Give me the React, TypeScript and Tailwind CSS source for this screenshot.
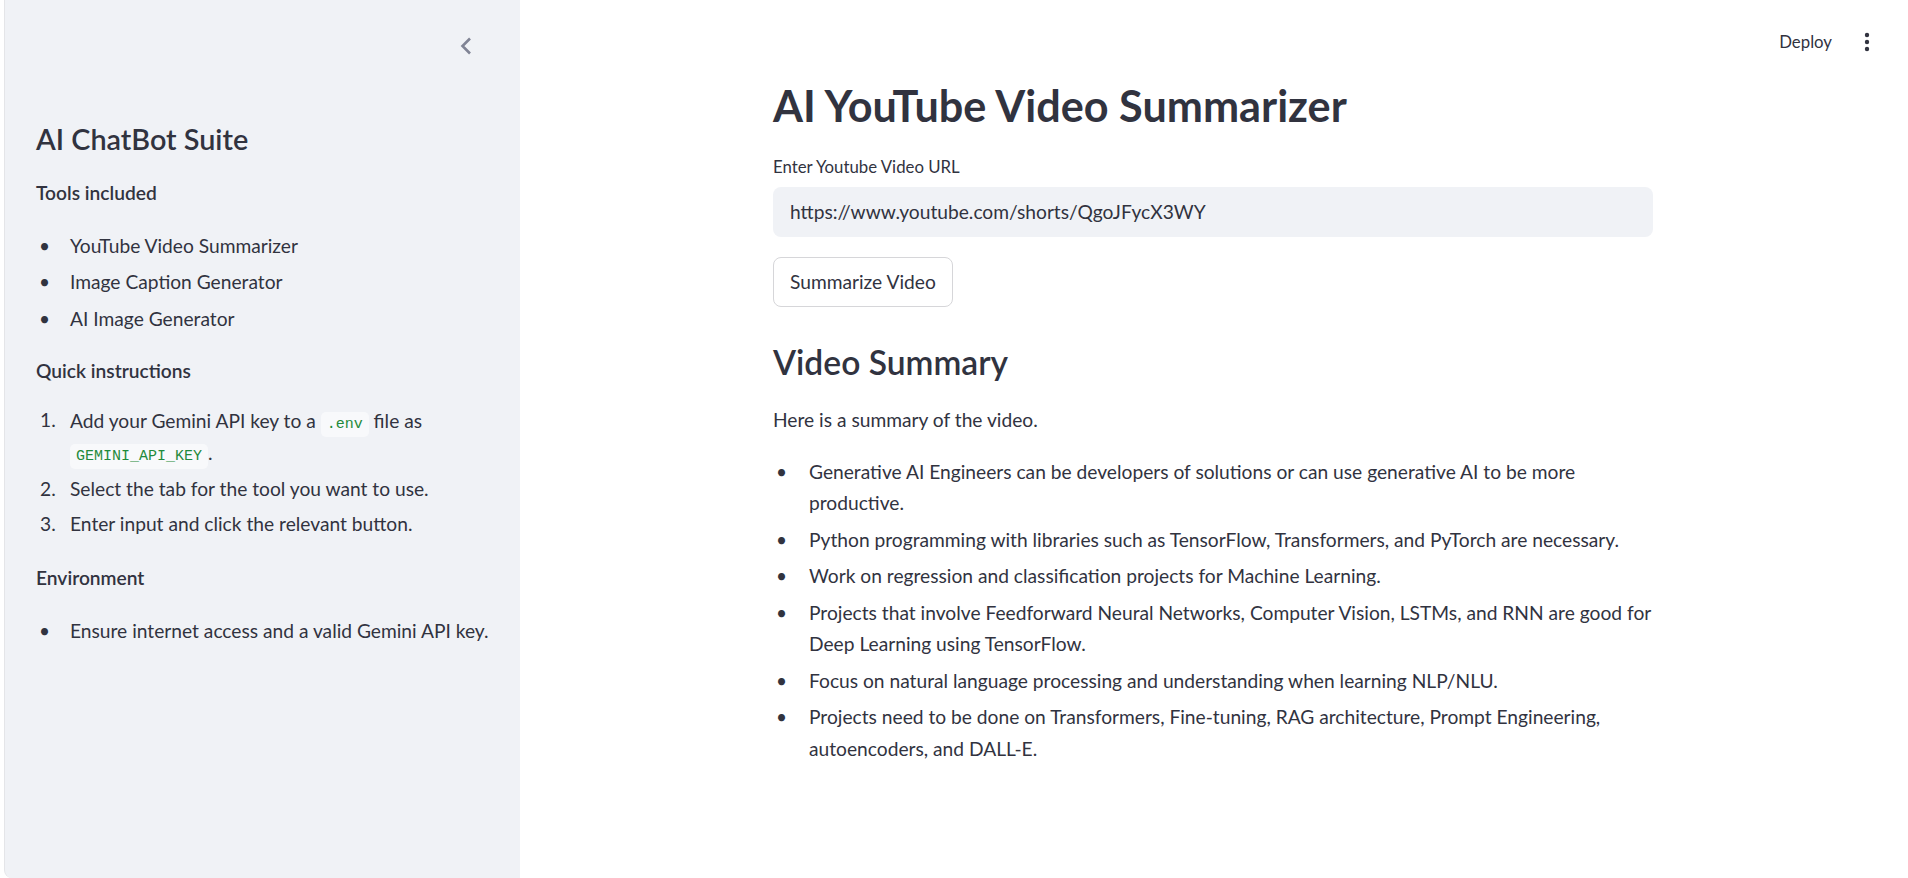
const summary = [
  "Generative AI Engineers can be developers of solutions or can use generative AI to be more productive.",
  "Python programming with libraries such as TensorFlow, Transformers, and PyTorch are necessary.",
  "Work on regression and classification projects for Machine Learning.",
  "Projects that involve Feedforward Neural Networks, Computer Vision, LSTMs, and RNN are good for Deep Learning using TensorFlow.",
  "Focus on natural language processing and understanding when learning NLP/NLU.",
  "Projects need to be done on Transformers, Fine-tuning, RAG architecture, Prompt Engineering, autoencoders, and DALL-E.",
];

const tools = ["YouTube Video Summarizer", "Image Caption Generator", "AI Image Generator"];

function Code({ children }: { children: string }) {
  return (
    <code className="rounded-[5px] bg-[#f8f9fb] px-[6px] py-[4px] font-['Liberation_Mono',monospace] text-[15px] leading-none text-[#1f8a3c]">
      {children}
    </code>
  );
}

function Bullet({ children, wide }: { children: React.ReactNode; wide?: boolean }) {
  return (
    <li className="flex">
      <span className={wide ? "w-[36px] shrink-0 pl-[3px] text-[19px]" : "w-[34px] shrink-0 pl-[3px] text-[19px]"}>•</span>
      <span>{children}</span>
    </li>
  );
}

function Sidebar() {
  return (
    <aside className="relative ml-[4px] flex w-[516px] shrink-0 flex-col rounded-bl-[8px] border-l border-[#e4e5e8] bg-[#f0f2f6] pl-[31px] pr-[20px] text-[19.2px] leading-[30.72px]">
      <div className="flex h-[92px] justify-end pt-[35px] pr-[27px]">
        <svg width="14" height="22" viewBox="0 0 14 22" className="text-[#808495]">
          <path d="M11 3.5 3.5 11 11 18.5" fill="none" stroke="currentColor" strokeWidth="2.6" />
        </svg>
      </div>
      <h2 className="mt-[30px] text-[28.8px] leading-[35px] font-semibold">AI ChatBot Suite</h2>
      <h5 className="mt-[21px] font-semibold">Tools included</h5>
      <ul className="mt-[22px] flex flex-col gap-[6px]">
        {tools.map((t) => (
          <Bullet key={t}>{t}</Bullet>
        ))}
      </ul>
      <h5 className="mt-[21px] font-semibold">Quick instructions</h5>
      <ol className="mt-[18px] flex flex-col gap-[5px]">
        <li className="flex">
          <span className="w-[34px] shrink-0 pl-[4px]">1.</span>
          <span className="leading-[32px]">
            Add your Gemini API key to a <Code>.env</Code> file as <Code>GEMINI_API_KEY</Code>.
          </span>
        </li>
        <li className="flex">
          <span className="w-[34px] shrink-0 pl-[4px]">2.</span>
          <span>Select the tab for the tool you want to use.</span>
        </li>
        <li className="flex">
          <span className="w-[34px] shrink-0 pl-[4px]">3.</span>
          <span>Enter input and click the relevant button.</span>
        </li>
      </ol>
      <h5 className="mt-[23px] font-semibold">Environment</h5>
      <ul className="mt-[22px]">
        <Bullet>Ensure internet access and a valid Gemini API key.</Bullet>
      </ul>
    </aside>
  );
}

export default function App() {
  return (
    <div className="flex h-[878px] w-full overflow-hidden bg-white font-['Source_Sans_Pro','Lato',sans-serif] text-[#31333f]">
      <Sidebar />
      <main className="relative flex-1">
        <div className="absolute top-[29px] right-[38px] flex items-center gap-[32px]">
          <span className="text-[16.8px]">Deploy</span>
          <svg width="6" height="20" viewBox="0 0 6 20" className="text-[#31333f]">
            <circle cx="3" cy="3" r="2.2" fill="currentColor" />
            <circle cx="3" cy="10" r="2.2" fill="currentColor" />
            <circle cx="3" cy="17" r="2.2" fill="currentColor" />
          </svg>
        </div>
        <div className="ml-[253px] w-[880px] pt-[79px] text-[19.2px] leading-[30.72px]">
          <h1 className="text-[43.2px] leading-[52px] font-bold">AI YouTube Video Summarizer</h1>
          <label className="mt-[25px] block text-[16.8px] leading-[22px]">Enter Youtube Video URL</label>
          <div className="mt-[9px] flex h-[50px] items-center rounded-[8px] bg-[#f0f2f6] px-[17px]">
            https://www.youtube.com/shorts/QgoJFycX3WY
          </div>
          <button className="mt-[20px] flex h-[50px] items-center rounded-[8px] border border-[#d6d6d9] bg-white px-[16px]">
            Summarize Video
          </button>
          <h2 className="mt-[35px] text-[33.6px] leading-[40px] font-semibold">Video Summary</h2>
          <p className="mt-[23px]">Here is a summary of the video.</p>
          <ul className="mt-[20px] flex flex-col gap-[5px] leading-[31.5px]">
            {summary.map((s) => (
              <Bullet key={s} wide>
                {s}
              </Bullet>
            ))}
          </ul>
        </div>
      </main>
    </div>
  );
}
